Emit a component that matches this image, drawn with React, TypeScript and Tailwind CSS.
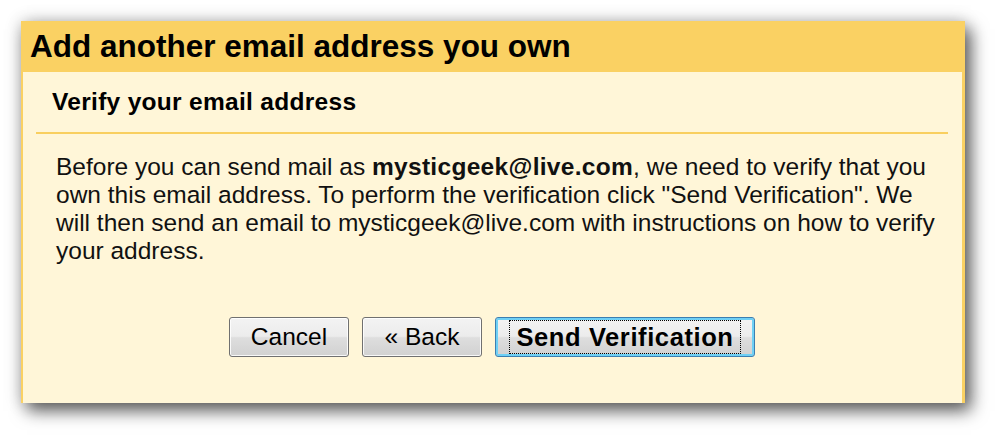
import React from "react";

const btnBase =
  "h-[40px] rounded-[3px] border border-[#707070] bg-[linear-gradient(#f3f3f3_0%,#ececec_48%,#dedede_52%,#d1d1d1_100%)] shadow-[inset_0_0_0_1px_rgba(255,255,255,0.85)] text-[24.5px] text-black flex items-center justify-center";

export default function App() {
  return (
    <div
      className="w-[1000px] h-[438px] bg-white pt-[21px] pl-[21px]"
      style={{ fontFamily: '"Liberation Sans", Arial, sans-serif' }}
    >
      <div className="w-[944px] h-[382px] flex flex-col shadow-[0_0_16px_rgba(0,0,0,0.2),6px_8px_16px_rgba(0,0,0,0.6)]">
        <div className="h-[51px] bg-[#fad163] pl-[9px] flex items-center">
          <h1 className="text-[31.5px] font-bold text-black leading-none">
            Add another email address you own
          </h1>
        </div>
        <div className="flex-1 bg-[#fff6d8] border-l-2 border-r-[3px] border-[#fad163] pt-[15px] pl-[13px] pr-[14px]">
          <h2 className="pl-[16px] text-[24.5px] font-bold leading-[29px] tracking-[0.3px] text-black">
            Verify your email address
          </h2>
          <div className="mt-[16px] h-[2px] bg-[#f9cf5f]" />
          <p className="pl-[20px] mt-[19px] text-[24.5px] leading-[28px] text-[#111] whitespace-nowrap">
            Before you can send mail as{" "}
            <b className="tracking-[0.3px]">mysticgeek@live.com</b>, we need to verify that you
            <br />
            own this email address. To perform the verification click "Send Verification". We
            <br />
            will then send an email to mysticgeek@live.com with instructions on how to verify
            <br />
            your address.
          </p>
          <div className="mt-[52px] flex justify-center gap-[13px]">
            <button className={`${btnBase} w-[120px]`}>Cancel</button>
            <button className={`${btnBase} w-[120px]`}>« Back</button>
            <button
              className="h-[40px] w-[260px] rounded-[3px] border border-[#3c7fb1] bg-[linear-gradient(#f3f3f3_0%,#ececec_48%,#dedede_52%,#d1d1d1_100%)] shadow-[inset_0_0_0_2px_#6fd0f5] flex items-center justify-center"
            >
              <span className="h-[34px] px-[6px] border border-dotted border-black flex items-center text-[25.5px] font-bold tracking-[0.6px] text-black">
                Send Verification
              </span>
            </button>
          </div>
        </div>
      </div>
    </div>
  );
}
